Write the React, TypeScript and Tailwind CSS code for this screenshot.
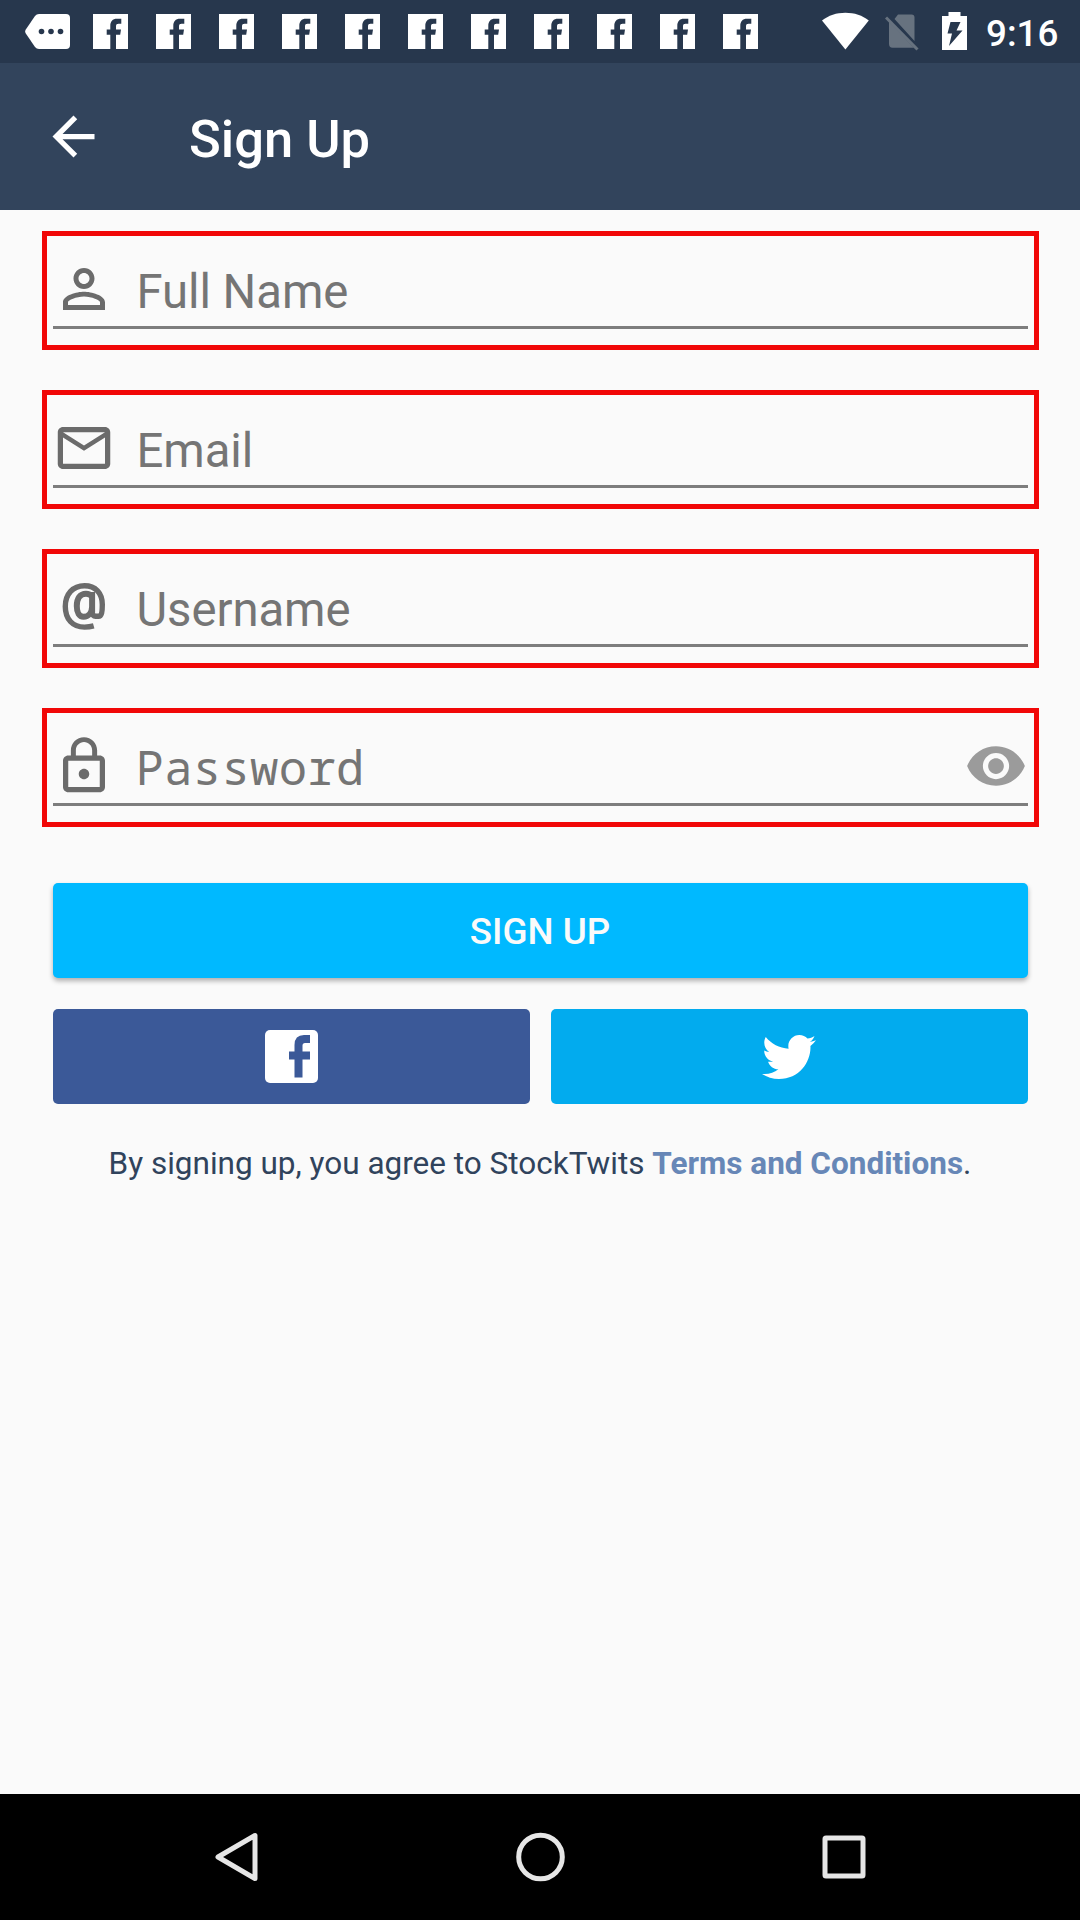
import React from "react";
import { FaTwitter } from "react-icons/fa";

const FacebookStatus = () => (
  <svg className="mr-7 h-[35px] w-[35px] shrink-0" viewBox="0 0 35 35" fill="#fff">
    <path d="M0 0H35V35H23V20.8H27.2L28 15.6H23V12.2C23 10.5 24 9.8 25.5 9.8H28.3V4.8H24C19.5 4.8 17.3 7.5 17.3 12V15.6H13.7V20.8H17.3V35H0Z" />
  </svg>
);

const iconClass = "h-[63px] w-[63px] shrink-0 -translate-x-[0.5px] -translate-y-[0.5px]";

const PersonIcon = () => (
  <svg className={iconClass} viewBox="0 0 24 24" fill="#6b6b6b">
    <path d="M12 5.9c1.16 0 2.1.94 2.1 2.1s-.94 2.1-2.1 2.1S9.9 9.16 9.9 8s.94-2.1 2.1-2.1m0 9c2.97 0 6.1 1.46 6.1 2.1v1.1H5.9V17c0-.64 3.13-2.1 6.1-2.1M12 4C9.79 4 8 5.79 8 8s1.79 4 4 4 4-1.79 4-4-1.79-4-4-4zm0 9c-2.67 0-8 1.34-8 4v3h16v-3c0-2.66-5.33-4-8-4z" />
  </svg>
);

const MailIcon = () => (
  <svg className={iconClass} viewBox="0 0 24 24" fill="#6b6b6b">
    <path d="M20 4H4c-1.1 0-1.99.9-1.99 2L2 18c0 1.1.9 2 2 2h16c1.1 0 2-.9 2-2V6c0-1.1-.9-2-2-2zm0 14H4V8l8 5 8-5v10zm-8-7L4 6h16l-8 5z" />
  </svg>
);

const AtIcon = () => (
  <svg className={iconClass} viewBox="0 0 63 63" fill="none" stroke="#6b6b6b">
    <path strokeWidth="5.4" d="M41.2 50.4C38 51.3 35.5 51.6 32 51.6C20 51.6 12.8 43.5 12.8 31C12.8 18.5 20.5 10.2 32 10.2C43 10.2 49.8 17.5 49.8 29C49.8 36 49.2 40.7 46 40.7H43C41 40.7 39.8 39 39.6 36" />
    <path strokeWidth="6" d="M39.6 16.5V37M39.6 21C38 19 36 18.2 33.5 18.2C27.5 18.2 24.3 23 24.3 30.5C24.3 37.5 26.8 41.3 31 41.3C36 41.3 39.4 37 39.6 31" />
  </svg>
);

const LockIcon = () => (
  <svg className={iconClass} viewBox="0 0 24 24" fill="#6b6b6b">
    <path d="M12 17c1.1 0 2-.9 2-2s-.9-2-2-2-2 .9-2 2 .9 2 2 2zm6-9h-1V6c0-2.76-2.24-5-5-5S7 3.24 7 6v2H6c-1.1 0-2 .9-2 2v10c0 1.1.9 2 2 2h12c1.1 0 2-.9 2-2V10c0-1.1-.9-2-2-2zM8.9 6c0-1.71 1.39-3.1 3.1-3.1s3.1 1.39 3.1 3.1v2H8.9V6zM18 20H6V10h12v10z" />
  </svg>
);

const EyeIcon = () => (
  <svg className={iconClass} viewBox="0 0 24 24" fill="#9b9b9b">
    <path d="M12 4.5C7 4.5 2.73 7.61 1 12c1.73 4.39 6 7.5 11 7.5s9.27-3.11 11-7.5c-1.73-4.39-6-7.5-11-7.5zM12 17c-2.76 0-5-2.24-5-5s2.24-5 5-5 5 2.24 5 5-2.24 5-5 5zm0-8c-1.66 0-3 1.34-3 3s1.34 3 3 3 3-1.34 3-3-1.34-3-3-3z" />
  </svg>
);

function Field({ icon, label, mono, action }: { icon: React.ReactNode; label: string; mono?: boolean; action?: React.ReactNode }) {
  return (
    <div className="h-[119px] border-5 border-[#f10707] pl-[5.5px] pr-[6px] pt-[17px]">
      <div className="flex h-[76px] items-start border-b-3 border-[#7d7d7d] pt-[4.5px]">
        {icon}
        <span
          className={
            mono
              ? "ml-[20px] mt-[4.5px] flex-1 font-['Droid_Sans_Mono','Noto_Sans_Mono','DejaVu_Sans_Mono',monospace] text-[47.25px] leading-[56px] tracking-[0.3px] text-[#757575]"
              : "ml-[21px] mt-[6.5px] flex-1 text-[47.25px] leading-[56px] tracking-[-0.05px] text-[#757575]"
          }
        >
          {label}
        </span>
        {action}
      </div>
    </div>
  );
}

export default function App() {
  return (
    <div className="flex h-[1920px] w-[1080px] flex-col overflow-hidden bg-[#fafafa] font-[Roboto,sans-serif]">
      <div className="flex h-[63px] shrink-0 items-start bg-[#27374d] pl-[25px]">
        <div className="flex pt-[14px]">
          <svg className="mr-[23px] h-[35px] w-[45px]" viewBox="0 0 45 35">
            <path fill="#fff" d="M14 0H41Q45 0 45 4V31Q45 35 41 35H14Q11.5 35 10 33L.8 19.5Q-.5 17.5 .8 15.5L10 2Q11.5 0 14 0Z" />
            <g fill="#27374d">
              <circle cx="16.5" cy="17.5" r="2.8" />
              <circle cx="26" cy="17.5" r="2.8" />
              <circle cx="35.5" cy="17.5" r="2.8" />
            </g>
          </svg>
          {Array.from({ length: 11 }, (_, i) => (
            <FacebookStatus key={i} />
          ))}
        </div>
        <svg className="ml-[36px] mt-[12px] h-[38px] w-[47px]" viewBox="0 0 47 38" fill="#fff">
          <path d="M0 8.5C6.5 3.5 14.5 .8 23.4 .8S40.5 3.5 46.8 8.5L23.4 37.5Z" />
        </svg>
        <svg className="ml-4 mt-[14px] h-[37px] w-[34px]" viewBox="0 0 34 37">
          <path fill="#67727f" d="M13 .5H26.5Q29.5 .5 29.5 3.5V27L9.5 5ZM4 7.5L29 33.7H7.5Q4 33.7 4 30Z" />
          <path stroke="#67727f" strokeWidth="3" d="M1 3.5L32.5 35.5" />
        </svg>
        <svg className="ml-[23px] mt-[12px] h-[38px] w-[25px]" viewBox="0 0 25 38">
          <path fill="#fff" d="M6.5 0H18.5V4H25V38H0V4H6.5Z" />
          <path fill="#27374d" d="M8.5 10H18.5L14.5 18.5H20.5L7 34L10 21.5H5.5Z" />
        </svg>
        <span className="ml-[19px] mt-[12px] text-[36.75px] font-medium leading-[43px] text-white">9:16</span>
      </div>

      <div className="flex h-[147px] shrink-0 items-center bg-[#32445c] pl-[42px]">
        <svg className="h-[63px] w-[63px]" viewBox="0 0 24 24" fill="#fff">
          <path d="M20 11H7.83l5.59-5.59L12 4l-8 8 8 8 1.41-1.41L7.83 13H20v-2z" />
        </svg>
        <h1 className="ml-[84px] mt-[5px] text-[52.5px] font-medium leading-[62px] text-white">Sign Up</h1>
      </div>

      <main className="flex-1 pt-[21px]">
        <div className="ml-[42px] flex w-[997px] flex-col gap-10">
          <Field icon={<PersonIcon />} label="Full Name" />
          <Field icon={<MailIcon />} label="Email" />
          <Field icon={<AtIcon />} label="Username" />
          <Field icon={<LockIcon />} label="Password" mono action={<EyeIcon />} />
        </div>
        <div className="mx-[52.5px] mt-[56px]">
          <button className="block h-[95px] w-full rounded-[5px] bg-[#00b9ff] pt-[2px] text-[36.75px] font-medium text-[#fafafa] shadow-[0_3px_5px_rgba(0,0,0,0.3)]">
            SIGN UP
          </button>
          <div className="mt-[31px] grid grid-cols-2 gap-[21px]">
            <button className="flex h-[95px] items-center justify-center rounded-[5px] bg-[#3b5998]" aria-label="Facebook">
              <svg className="h-[53px] w-[53px]" viewBox="0 0 53 53">
                <rect width="53" height="53" rx="5" fill="#fff" />
                <path fill="#3b5998" d="M45 5V13H40Q37.5 13 37.5 15.5V21.5H45V29.5H37.5V47.5H29.5V29.5H24V21.5H29.5V15Q29.5 5 39 5Z" />
              </svg>
            </button>
            <button className="flex h-[95px] items-center justify-center rounded-[5px] bg-[#02abee] pt-px" aria-label="Twitter">
              <FaTwitter className="h-[54px] w-[54px] text-white" />
            </button>
          </div>
        </div>
        <p className="mt-[41px] text-center text-[31.5px] leading-[37px] text-[#30435c]">
          By signing up, you agree to StockTwits <b className="font-bold text-[#6787b7]">Terms and Conditions</b>.
        </p>
      </main>

      <nav className="flex h-[126px] shrink-0 items-center justify-between bg-black pl-[211px] pr-[210px]">
        <svg className="h-[52px] w-[52px]" viewBox="0 0 52 52" fill="none" stroke="#e6e6e6" strokeWidth="5" strokeLinejoin="round">
          <path d="M44 4.5V47.5L7 26Z" />
        </svg>
        <svg className="h-[52px] w-[52px]" viewBox="0 0 52 52" fill="none" stroke="#e6e6e6" strokeWidth="5">
          <circle cx="25.5" cy="26" r="21.8" />
        </svg>
        <svg className="h-[52px] w-[52px]" viewBox="0 0 52 52" fill="none" stroke="#e6e6e6" strokeWidth="5">
          <rect x="7" y="7" width="38" height="38" rx="1" />
        </svg>
      </nav>
    </div>
  );
}
